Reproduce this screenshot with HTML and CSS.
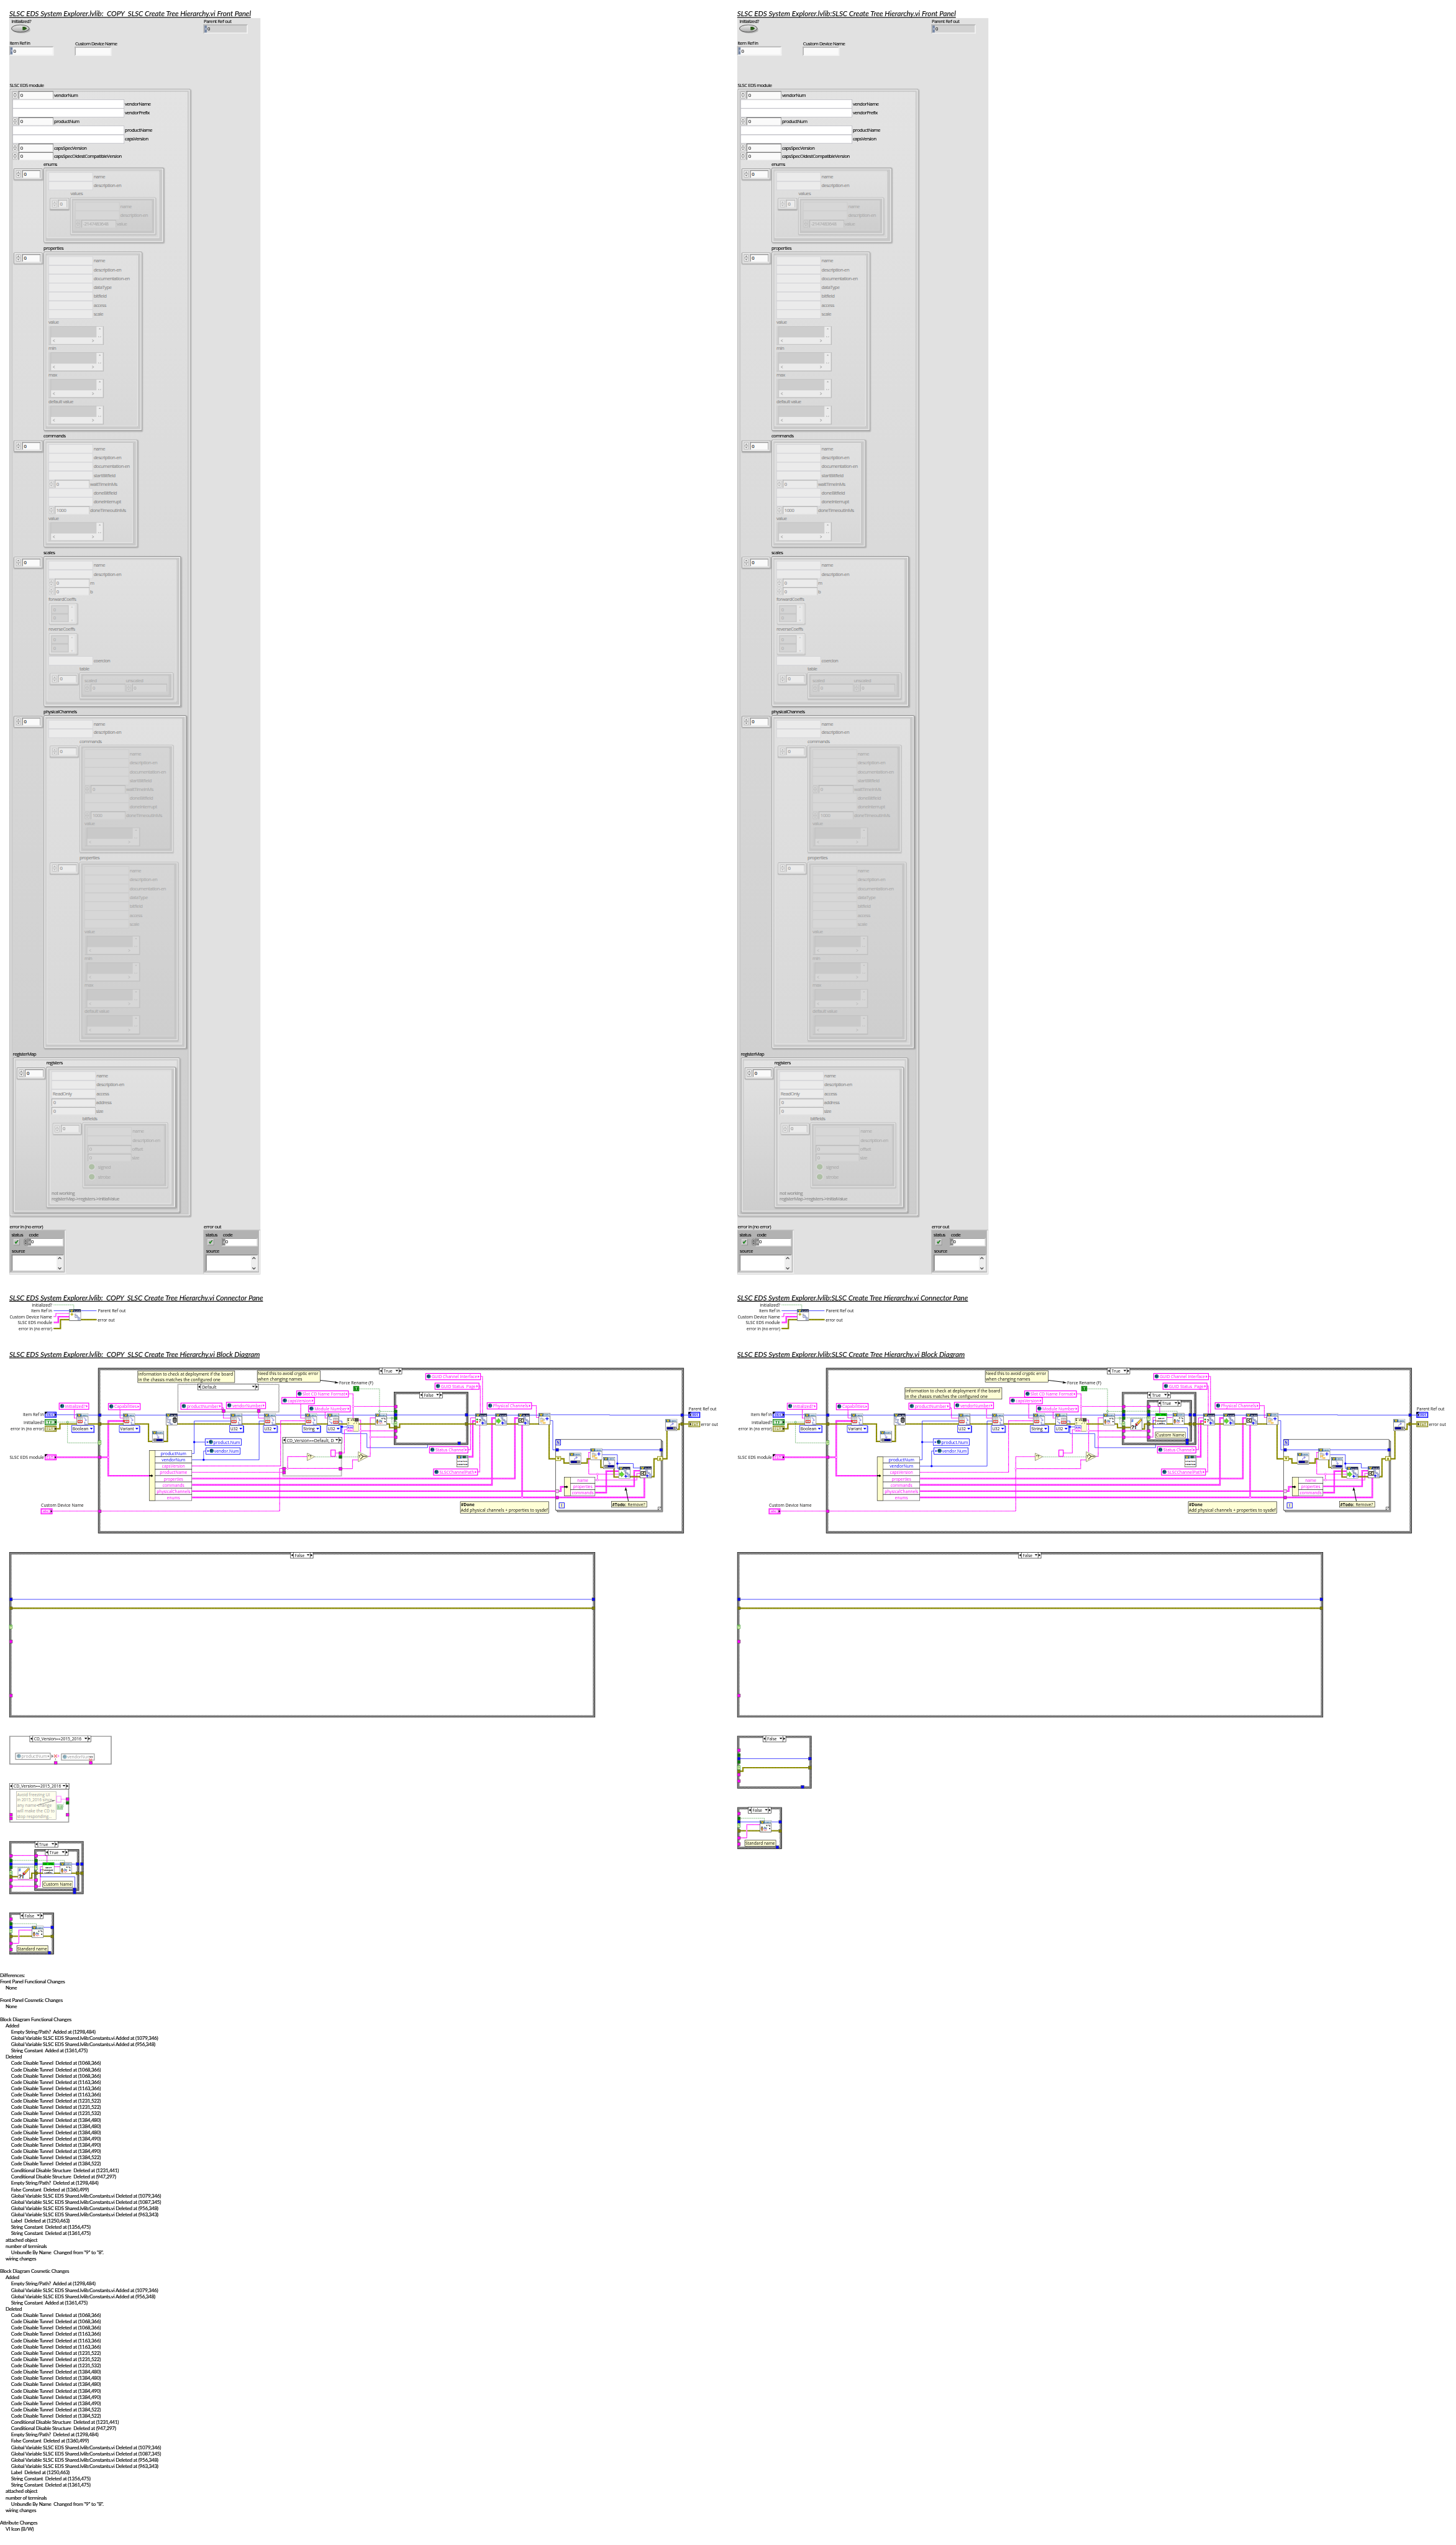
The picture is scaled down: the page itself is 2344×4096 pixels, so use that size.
FILE: index.html
```html
<!DOCTYPE html>
<html lang="en">
<head>
<meta charset="utf-8">
<title>SLSC Create Tree Hierarchy.vi - VI comparison report</title>
<link rel="stylesheet" href="styles.css">
</head>
<body>
<svg class="defs" width="0" height="0" aria-hidden="true">
  <defs>
    <pattern id="hatch" width="4" height="4" patternUnits="userSpaceOnUse">
      <rect width="4" height="4" fill="#222"/><rect width="2" height="2" fill="#e4e4e4"/><rect x="2" y="2" width="2" height="2" fill="#e4e4e4"/>
    </pattern>
    <pattern id="hatch-soft" width="4" height="4" patternUnits="userSpaceOnUse">
      <rect width="4" height="4" fill="#fff"/><rect width="2" height="2" fill="#777"/><rect x="2" y="2" width="2" height="2" fill="#777"/>
    </pattern>
    <linearGradient id="btn" x1="0" y1="0" x2="0" y2="1"><stop offset="0" stop-color="#eee"/><stop offset="1" stop-color="#aaa"/></linearGradient>

    <symbol id="spin" viewBox="0 0 13 20">
      <rect x=".7" y=".7" width="11.6" height="9" rx="2" fill="var(--key)" stroke="var(--edge)"/>
      <rect x=".7" y="10.3" width="11.6" height="9" rx="2" fill="var(--key)" stroke="var(--edge)"/>
      <path d="M3.5 6.5 6.5 3.8 9.5 6.5zM3.5 13.5 6.5 16.2 9.5 13.5z" fill="var(--mark)"/>
    </symbol>
    <symbol id="variant" viewBox="0 0 150 52">
      <rect width="150" height="52" fill="var(--well)"/>
      <path d="M0 51.3H149.3V0" fill="none" stroke="var(--edge)" stroke-width="1.4"/>
      <rect x="6" y="1" width="141" height="48" fill="var(--field)"/>
      <rect x="6" y="1" width="124" height="30" fill="var(--dark)"/>
      <path d="M6 49V1H147" fill="none" stroke="var(--edge)"/>
      <path d="M136 9 139 6 142 9zM135 30V27l3 3zM142 30V27l-3 3z" fill="var(--mark)"/>
      <path d="M17 37 12 40 17 43M118 37 123 40 118 43" fill="none" stroke="var(--mark)" stroke-width="1.6"/>
    </symbol>

    <symbol id="globe" viewBox="0 0 12 12">
      <circle cx="6" cy="6" r="5" fill="#1fb4e6" stroke="#111"/>
      <path d="M3 3l3-1 1 2-2 2 2 1-1 3-2-2-2-2zM8 3l2 2-1 3-2-1z" fill="#123"/>
    </symbol>
    <symbol id="nodes" viewBox="0 0 32 32">
      <path d="M18 12v13h4M18 15h4M22 17v3h4" fill="none" stroke="#557"/>
      <path d="M15 10h6v3h-6zM20 16h6v3h-6zM25 20h6v3h-6zM25 25h6v3h-6z" fill="#b9c3ee" stroke="#6470a8" stroke-width=".8"/>
      <path d="M20 22v8M16 26h8" stroke="#00f" stroke-width="2"/>
    </symbol>
    <symbol id="cdev" viewBox="0 0 32 32">
      <rect x=".5" y=".5" width="31" height="31" fill="#fff" stroke="#000"/>
      <rect x="1" y="1" width="30" height="7" fill="#dfeaf4"/><rect x="1" y="1" width="12" height="7" fill="#2f639c"/>
      <path d="M4 1.5 7 7 10 1.5" fill="none" stroke="#fc0" stroke-width="2.2"/>
      <text x="13.5" y="7" class="ic" textLength="16.5" fill="#2a6496">CDEV</text><path d="M1 8.5H31" stroke="#234"/>
    </symbol>
    <symbol id="slsc" viewBox="0 0 32 32">
      <rect x=".5" y=".5" width="31" height="31" fill="#fff" stroke="#000"/>
      <rect x="1" y="1" width="30" height="7" fill="#0b1440"/><rect x="1" y="1" width="11" height="7" fill="#2f639c"/>
      <path d="M4 1.5 7 7 10 1.5" fill="none" stroke="#fc0" stroke-width="2.2"/>
      <text x="13" y="7" class="ic" textLength="17" fill="#fff">SLSC</text>
    </symbol>
    <symbol id="set" viewBox="0 0 32 32">
      <use href="#cdev"/><rect x="3.500" y="10.500" width="12" height="16" fill="#eee" stroke="#777"/>
      <path d="M6 13h7M6 16h7M6 19h7" stroke="#888"/><rect x="3.500" y="19.500" width="12" height="5" fill="#fff" stroke="#e00" stroke-width="1.4"/><path d="M6 22h7" stroke="#444"/>
      <path d="M19 12q6 0 6 7M22 17l3 3 3-3" fill="none" stroke="#22c"/><path d="M20 24h4M26 29h4M22 26v3h4" stroke="#7f8cc8" stroke-width="2" fill="none"/>
    </symbol>
    <symbol id="get" viewBox="0 0 32 32">
      <use href="#cdev"/><rect x="16.500" y="12.500" width="12" height="16" fill="#eee" stroke="#777"/>
      <path d="M19 15h7M19 18h7" stroke="#888"/><rect x="16.500" y="21.500" width="12" height="5" fill="#fff" stroke="#e00" stroke-width="1.4"/><path d="M19 24h7" stroke="#444"/>
      <path d="M6 20q0 6 7 6M10 23l3 3-3 3" fill="none" stroke="#22c"/><path d="M3 12h5M7 17h5M5 14v3" stroke="#7f8cc8" stroke-width="2" fill="none"/>
    </symbol>
    <symbol id="down" viewBox="0 0 32 32">
      <use href="#cdev"/><path d="M12 11q5 0 5 8M13.500 16l3.500 4 3.500-4" fill="none" stroke="#22c"/>
      <rect x="4" y="22" width="25" height="6" fill="#ccc" stroke="#000"/><rect x="12" y="22.500" width="16.500" height="5" fill="#00c"/><path d="M8 22v6M12 22v6M16 22v6M20 22v6M24 22v6" stroke="#000"/>
    </symbol>
    <symbol id="up" viewBox="0 0 32 32">
      <use href="#cdev"/><path d="M14 20q0-7 7-7M18 10l4 3-4 3" fill="none" stroke="#22c"/>
      <rect x="4" y="22" width="25" height="6" fill="#ccc" stroke="#000"/><rect x="4.500" y="22.500" width="16" height="5" fill="#00c"/><path d="M8 22v6M12 22v6M16 22v6M20 22v6M24 22v6" stroke="#000"/>
    </symbol>
    <symbol id="tree" viewBox="0 0 32 32">
      <use href="#cdev"/><path d="M5 13h5v3h-5zM11 17h5v3h-5z" fill="#eee" stroke="#888"/><path d="M6 16v11h4M7 22h3M10 15h6" fill="none" stroke="#888"/>
      <path d="M6 20h6v3h-6zM12 25h6v3h-6z" fill="#fff" stroke="#f0a800" stroke-width="1.4"/><path d="M23 11v9M18.500 15.500h9" stroke="#00f" stroke-width="2"/>
    </symbol>
    <symbol id="rename" viewBox="0 0 32 32">
      <use href="#cdev"/><circle cx="6" cy="18" r="2" fill="#555"/><path d="M3.500 20h5l-1 6-1.500 3-1.500-3z" fill="#f09a20" stroke="#222" stroke-width=".8"/>
      <path d="M11 19q2-4 4 0t4-1" fill="none" stroke="#080"/><path d="M10 23h2v-3h3v3h3v-3" fill="none" stroke="#00a"/><path d="M10 28l3-3 2 3 3-3 2 2" fill="none" stroke="#e00"/>
      <text x="17" y="15.500" class="ic">A</text><text x="25" y="23.500" class="ic">B</text><path d="M22 13h5v3M25 14.500l2 2 2-2" fill="none" stroke="#000"/>
    </symbol>
    <symbol id="trash" viewBox="0 0 32 32">
      <use href="#slsc"/><path d="M4 11v14h4M4 17h5M11 19v9h4" fill="none" stroke="#557"/>
      <path d="M3 10h5v3H3zM8 16h6v3H8zM7 23h6v3H7zM13 27h5v3h-5z" fill="#b9c3ee" stroke="#6470a8" stroke-width=".7"/>
      <path d="M20 13h9v9l-2 3h-5l-2-3z" fill="#999" stroke="#000" stroke-width="1.5"/><ellipse cx="24.500" cy="12.500" rx="4" ry="2" fill="#555" stroke="#000"/><path d="M23 16v6M26 16v6" stroke="#222"/>
    </symbol>
    <symbol id="status" viewBox="0 0 32 32"><use href="#slsc"/><use href="#nodes"/><circle cx="5" cy="16.500" r="2.300" fill="#0a0"/><circle cx="5" cy="23" r="2.300" fill="#e00"/><text x="9" y="23.500" class="q">?</text></symbol>
    <symbol id="cmd" viewBox="0 0 32 32"><use href="#slsc"/><use href="#nodes"/><path d="M3 17h5v-4l7 7.500-7 7.500v-4H3z" fill="#6d3" stroke="#391"/></symbol>
    <symbol id="prop" viewBox="0 0 32 32"><use href="#slsc"/><use href="#nodes"/><rect x="3" y="14" width="12" height="10" fill="#ffd" stroke="#000" stroke-width="1.600"/><path d="M5 19h4M12 16H9v6h3" stroke="#000" stroke-width="1.500" fill="none"/></symbol>
    <symbol id="create" viewBox="0 0 32 32"><use href="#slsc"/><path d="M14 13.500h5M16 14v9h4M20 18h3M22 21h1" stroke="#446" fill="none"/><path d="M17 16h5v2.500h-5zM20 20h5v2.500h-5zM23 23h6v2.500h-6zM23 27h6v2h-6z" fill="#b9c3ee" stroke="#6470a8" stroke-width=".7"/><path d="M7.500 9.500v9M3 14h9M4.500 11l6 6M10.500 11l-6 6" stroke="#c8b400" stroke-width="1.300"/><circle cx="7.500" cy="14" r="1.800" fill="#ff0" stroke="#333" stroke-width=".7"/></symbol>
    <symbol id="unique" viewBox="0 0 32 32"><rect x=".5" y=".5" width="31" height="31" fill="#fff" stroke="#000"/><rect x="1" y="1" width="30" height="7" fill="#0e0"/><text x="1.500" y="7" class="ic" textLength="29">CDV UTIL</text><text x="8" y="16" class="ic" textLength="17">NEXT</text><text x="3.500" y="23" class="ic" textLength="25">UNIQUE</text><text x="5" y="30" class="ic" textLength="22">LABEL</text><path d="M0 18l3 2.500-3 2.500z" fill="#e00"/></symbol>
    <symbol id="eraser" viewBox="0 0 32 32"><rect x=".5" y=".5" width="31" height="31" fill="#fff" stroke="#000"/><text x="2" y="11" class="hash">#</text><text x="1.500" y="29" class="big">?!</text><path d="M17 13 28 2l3 3-10 12z" fill="#fc3" stroke="#000" stroke-width=".8"/><path d="M13 16l4-4 5 4-5 5z" fill="#d12" stroke="#000" stroke-width=".8"/><path d="M16 13l5 4" stroke="#ddd" stroke-width="2"/></symbol>
    <symbol id="config" viewBox="0 0 32 32"><rect x=".5" y=".5" width="31" height="31" fill="#fff" stroke="#000"/><rect x="1" y="1" width="13" height="8" fill="#2f639c"/><rect x="14" y="1" width="17" height="8" fill="#bcd"/><path d="M4 2 7 7.500 10 2" fill="none" stroke="#fc0" stroke-width="2.200"/><rect x="17" y="2.500" width="8" height="5" fill="#174" stroke="#222"/><path d="M28.500 2v6" stroke="#222"/><text x="2.500" y="19" class="ic" textLength="27">STATUS</text><text x="2.500" y="27.500" class="ic" textLength="27">CONFIG</text></symbol>
    <symbol id="format" viewBox="0 0 32 37"><rect x=".5" y=".5" width="31" height="36" fill="#ffffcc" stroke="#554"/><text x="1.500" y="9" class="fm">E</text><text x="10" y="9" class="fm">+%</text><rect x="22" y="2" width="8" height="7" fill="#555" stroke="#000"/><text x="2" y="18" class="fm">!</text><path d="M17 17l4-4M26 12v4" stroke="#000"/><rect x=".5" y="21" width="16" height="7.500" fill="#fff" stroke="#00f"/><text x="2" y="27.500" class="ic" textLength="13" fill="#00f">U32</text><rect x=".5" y="28.500" width="16" height="8" fill="#fff" stroke="#f0f"/><text x="2" y="35" class="ic" textLength="13" fill="#f0f">abc</text></symbol>
  </defs>
</svg>

<main class="page">
  <section class="column">
    <h2 class="title" data-width="653">SLSC EDS System Explorer.lvlib:  COPY  SLSC Create Tree Hierarchy.vi Front Panel</h2>
    <div class="panel" id="panel">
      <div class="strip">
        <div class="ctl w-ref"><span class="lb">Initialized?</span>
          <svg class="toggle" viewBox="0 0 53 25"><ellipse cx="28" cy="14.500" rx="24" ry="9.500" fill="#9a9a9a" opacity=".6"/><ellipse cx="25" cy="11" rx="24" ry="9.800" fill="url(#btn)" stroke="#444" stroke-width="1.500"/><path d="M31 6h5q3 0 7 5-4 4-7 4.500h-5z" fill="#2a5c18"/></svg></div>
        <div class="ctl w-out"><span class="lb">Parent Ref out</span><div class="ref out"><i>x</i>0</div></div>
      </div>
      <div class="strip second">
        <div class="ctl w-item"><span class="lb">Item Ref in</span><div class="ref"><i>x</i>0</div></div>
        <div class="ctl w-name"><span class="lb">Custom Device Name</span><div class="ref name"></div></div>
      </div>
      <span class="lb block">SLSC EDS module</span>
      <div class="cluster main">
        <div class="row n"><svg class="spin"><use href="#spin"/></svg><b class="num">0</b><span>vendorNum</span></div>
        <div class="row"><b class="str wide"></b><span>vendorName</span></div>
        <div class="row"><b class="str wide"></b><span>vendorPrefix</span></div>
        <div class="row n"><svg class="spin"><use href="#spin"/></svg><b class="num">0</b><span>productNum</span></div>
        <div class="row"><b class="str wide"></b><span>productName</span></div>
        <div class="row"><b class="str wide"></b><span>capsVersion</span></div>
        <div class="row n"><svg class="spin"><use href="#spin"/></svg><b class="num">0</b><span>capsSpecVersion</span></div>
        <div class="row n"><svg class="spin"><use href="#spin"/></svg><b class="num">0</b><span data-width="183" data-scope=".panel">capsSpecOldestCompatibleVersion</span></div>

        <div class="cap">enums</div>
        <div class="array">
          <div class="index"><svg class="spin"><use href="#spin"/></svg><b class="num">0</b></div>
          <div class="frame f-enums"><div class="cluster dim">
            <div class="row"><b class="str"></b><span>name</span></div>
            <div class="row"><b class="str"></b><span>description-en</span></div>
            <div class="cap short">values</div>
            <div class="array">
              <div class="index small"><svg class="spin"><use href="#spin"/></svg><b class="num">0</b></div>
              <div class="frame f-values"><div class="cluster dim dimmer">
                <div class="row"><b class="str"></b><span>name</span></div>
                <div class="row"><b class="str"></b><span>description-en</span></div>
                <div class="row n"><svg class="spin"><use href="#spin"/></svg><b class="num">-2147483648</b><span>value</span></div>
              </div></div>
            </div>
          </div></div>
        </div>

        <div class="cap next">properties</div>
        <div class="array">
          <div class="index"><svg class="spin"><use href="#spin"/></svg><b class="num">0</b></div>
          <div class="frame f-props"><div class="cluster dim" id="props">
            <div class="row"><b class="str"></b><span>name</span></div>
            <div class="row"><b class="str"></b><span>description-en</span></div>
            <div class="row"><b class="str"></b><span>documentation-en</span></div>
            <div class="row"><b class="str"></b><span>dataType</span></div>
            <div class="row"><b class="str"></b><span>bitfield</span></div>
            <div class="row"><b class="str"></b><span>access</span></div>
            <div class="row"><b class="str"></b><span>scale</span></div>
            <div class="vl">value</div><svg class="variant"><use href="#variant"/></svg>
            <div class="vl">min</div><svg class="variant"><use href="#variant"/></svg>
            <div class="vl">max</div><svg class="variant"><use href="#variant"/></svg>
            <div class="vl">default value</div><svg class="variant"><use href="#variant"/></svg>
          </div></div>
        </div>

        <div class="cap next">commands</div>
        <div class="array">
          <div class="index"><svg class="spin"><use href="#spin"/></svg><b class="num">0</b></div>
          <div class="frame f-cmds"><div class="cluster dim" id="cmds">
            <div class="row"><b class="str"></b><span>name</span></div>
            <div class="row"><b class="str"></b><span>description-en</span></div>
            <div class="row"><b class="str"></b><span>documentation-en</span></div>
            <div class="row"><b class="str"></b><span>startBitfield</span></div>
            <div class="row n"><svg class="spin"><use href="#spin"/></svg><b class="num">0</b><span>waitTimeInMs</span></div>
            <div class="row"><b class="str"></b><span>doneBitfield</span></div>
            <div class="row"><b class="str"></b><span>doneInterrupt</span></div>
            <div class="row n"><svg class="spin"><use href="#spin"/></svg><b class="num">1000</b><span>doneTimeoutInMs</span></div>
            <div class="vl">value</div><svg class="variant"><use href="#variant"/></svg>
          </div></div>
        </div>

        <div class="cap next">scales</div>
        <div class="array">
          <div class="index"><svg class="spin"><use href="#spin"/></svg><b class="num">0</b></div>
          <div class="frame f-scales"><div class="cluster dim">
            <div class="row"><b class="str"></b><span>name</span></div>
            <div class="row"><b class="str"></b><span>description-en</span></div>
            <div class="row n"><svg class="spin"><use href="#spin"/></svg><b class="num">0</b><span>m</span></div>
            <div class="row n"><svg class="spin"><use href="#spin"/></svg><b class="num">0</b><span>b</span></div>
            <div class="vl">forwardCoeffs</div>
            <div class="coeffs"><div><b>0</b><b>0</b></div><i><s>▲</s><s>▼</s></i></div>
            <div class="vl gap">reverseCoeffs</div>
            <div class="coeffs"><div><b>0</b><b>0</b></div><i><s>▲</s><s>▼</s></i></div>
            <div class="row coercion"><b class="str"></b><span>coercion</span></div>
            <div class="cap">table</div>
            <div class="array">
              <div class="index"><svg class="spin"><use href="#spin"/></svg><b class="num">0</b></div>
              <div class="frame f-table"><div class="cluster dim dimmer pair">
                <div><span>scaled</span><div class="row n"><svg class="spin"><use href="#spin"/></svg><b class="num">0</b></div></div>
                <div><span>unscaled</span><div class="row n"><svg class="spin"><use href="#spin"/></svg><b class="num">0</b></div></div>
              </div></div>
            </div>
          </div></div>
        </div>

        <div class="cap next">physicalChannels</div>
        <div class="array">
          <div class="index"><svg class="spin"><use href="#spin"/></svg><b class="num">0</b></div>
          <div class="frame f-phys"><div class="cluster dim">
            <div class="row"><b class="str"></b><span>name</span></div>
            <div class="row lift"><b class="str"></b><span>description-en</span></div>
            <div class="cap">commands</div>
            <div class="array">
              <div class="index"><svg class="spin"><use href="#spin"/></svg><b class="num">0</b></div>
              <div class="frame f-cmds"><div class="cluster dim dimmer" data-clone="cmds"></div></div>
            </div>
            <div class="cap next">properties</div>
            <div class="array">
              <div class="index"><svg class="spin"><use href="#spin"/></svg><b class="num">0</b></div>
              <div class="frame f-props"><div class="cluster dim dimmer" data-clone="props"></div></div>
            </div>
          </div></div>
        </div>

        <div class="cap next root">registerMap</div>
        <div class="cluster map">
          <div class="cap">registers</div>
          <div class="array">
            <div class="index"><svg class="spin"><use href="#spin"/></svg><b class="num">0</b></div>
            <div class="frame f-regs"><div class="cluster dim">
              <div class="row"><b class="str"></b><span>name</span></div>
              <div class="row"><b class="str"></b><span>description-en</span></div>
              <div class="row"><b class="str">ReadOnly</b><span>access</span></div>
              <div class="row n"><b class="num full">0</b><span>address</span></div>
              <div class="row n"><b class="num full">0</b><span>size</span></div>
              <div class="cap">bitfields</div>
              <div class="array">
                <div class="index"><svg class="spin"><use href="#spin"/></svg><b class="num">0</b></div>
                <div class="frame f-bits"><div class="cluster dim dimmer">
                  <div class="row"><b class="str"></b><span>name</span></div>
                  <div class="row"><b class="str"></b><span>description-en</span></div>
                  <div class="row n"><b class="num full">0</b><span>offset</span></div>
                  <div class="row n"><b class="num full">0</b><span>size</span></div>
                  <div class="row led"><i></i><span>signed</span></div>
                  <div class="row led"><i></i><span>strobe</span></div>
                </div></div>
              </div>
              <p class="remark">not working<br>registerMap-&gt;registers-&gt;initialValue</p>
            </div></div>
          </div>
        </div>
      </div>
      <div class="strip errors">
        <div class="ctl"><span class="lb">error in (no error)</span>
          <div class="error">
            <div class="heads"><span>status</span><span>code</span></div>
            <div class="vals"><svg class="check" viewBox="0 0 20 20"><rect width="20" height="20" fill="#888"/><path d="M0 20V0H20L18 2V18H2z" fill="#e4e4e4"/><rect x="2" y="2" width="16" height="16" fill="#c8c8c8"/><path d="M5 10l3 5 7-10-2 0-5 6-1-2z" fill="#0e0" stroke="#111"/></svg>
              <svg class="knob" viewBox="0 0 12 22"><rect x="1" y="1" width="10" height="20" rx="5" fill="#aaa" stroke="#666"/><path d="M3 8.500 6 5 9 8.500zM3 13.500 6 17 9 13.500zM1 11H11" fill="#333" stroke="#666" stroke-width=".5"/></svg>
              <div class="code"><i>d</i>0</div></div>
            <span>source</span>
            <div class="source"><svg viewBox="0 0 16 38"><rect width="16" height="38" fill="#eee"/><path d="M4 9l4-4 4 4M4 31l4 4 4-4" fill="none" stroke="#555" stroke-width="2.200"/></svg></div>
          </div></div>
        <div class="ctl"><span class="lb">error out</span>
          <div class="error">
            <div class="heads"><span>status</span><span>code</span></div>
            <div class="vals"><svg class="check" viewBox="0 0 20 20"><rect width="20" height="20" fill="#888"/><path d="M0 20V0H20L18 2V18H2z" fill="#e4e4e4"/><rect x="2" y="2" width="16" height="16" fill="#c8c8c8"/><path d="M5 10l3 5 7-10-2 0-5 6-1-2z" fill="#0e0" stroke="#111"/></svg>
              <svg class="knob" viewBox="0 0 12 22"></svg>
              <div class="code"><i>d</i>0</div></div>
            <span>source</span>
            <div class="source"><svg viewBox="0 0 16 38"><rect width="16" height="38" fill="#eee"/><path d="M4 9l4-4 4 4M4 31l4 4 4-4" fill="none" stroke="#555" stroke-width="2.200"/></svg></div>
          </div></div>
      </div>
    </div>
    <h2 class="title pane" data-width="686">SLSC EDS System Explorer.lvlib:  COPY  SLSC Create Tree Hierarchy.vi Connector Pane</h2>
    <svg class="sketch" data-draw="connector" viewBox="0 3518 1960 82"></svg>
    <h2 class="title blocks" data-width="677">SLSC EDS System Explorer.lvlib:  COPY  SLSC Create Tree Hierarchy.vi Block Diagram</h2>
    <svg class="sketch" data-draw="before" viewBox="0 31 1960 479"></svg>
    <svg class="sketch sub first" data-draw="outerFalse" viewBox="-25 0 1960 447"></svg>
    <svg class="sketch sub" data-draw="version1" viewBox="-25 0 1960 78"></svg>
    <svg class="sketch sub" data-draw="version2" viewBox="-25 0 1960 107"></svg>
    <svg class="sketch sub" data-draw="innerTrue" viewBox="-25 0 1960 143"></svg>
    <svg class="sketch sub" data-draw="standard" viewBox="-25 0 1960 113"></svg>
    <div class="diff" id="diff"></div>
  </section>

  <section class="column">
    <h2 class="title" data-width="591">SLSC EDS System Explorer.lvlib:SLSC Create Tree Hierarchy.vi Front Panel</h2>
    <div class="panel" data-clone="panel"></div>
    <h2 class="title pane" data-width="624">SLSC EDS System Explorer.lvlib:SLSC Create Tree Hierarchy.vi Connector Pane</h2>
    <svg class="sketch" data-draw="connector" viewBox="0 3518 1960 82"></svg>
    <h2 class="title blocks" data-width="615">SLSC EDS System Explorer.lvlib:SLSC Create Tree Hierarchy.vi Block Diagram</h2>
    <svg class="sketch" data-draw="after" viewBox="0 31 1960 479"></svg>
    <svg class="sketch sub first" data-draw="outerFalse" viewBox="-25 0 1960 447"></svg>
    <svg class="sketch sub" data-draw="innerFalse" viewBox="-25 0 1960 143"></svg>
    <svg class="sketch sub" data-draw="standard" viewBox="-25 0 1960 113"></svg>
  </section>
</main>
<script src="script.js"></script>
</body>
</html>
```
FILE: styles.css
```css
* { box-sizing: border-box; }
html { overflow: hidden; background: #fff; }
body { margin: 0; width: 2344px; height: 4096px; overflow: hidden; background: #fff; }
.defs { display: block; position: absolute; }
.page {
  display: grid; grid-template-columns: 1968px 1960px; align-items: start;
  width: 3928px; height: 6876px; overflow: hidden;
  transform: scale(.5955); transform-origin: 0 0;
  font: 12.800px/15px "Open Sans", "Noto Sans", sans-serif; color: #000;
  -webkit-text-stroke: .2px;
}
.column { display: flex; flex-direction: column; align-items: flex-start; min-width: 0; }

.title {
  margin: 20px 0 1px 25px; height: 28px; width: max-content;
  font: italic 400 19.6px/33px Lato, "Open Sans", sans-serif;
  white-space: pre; border-bottom: 2px solid #000;
}
.title.pane { margin: 45px 0 0 25px; }
.title.blocks { margin: 43px 0 0 25px; }

/* ---- front panel ---- */
.panel {
  --ink: #000; --field: #fafafa; --line: #a4a4ac; --edge: #888; --key: #f0f0f0; --mark: #555; --well: #ccc; --dark: #cecece;
  width: 679px; height: 3396px; margin-left: 25px; background: #e1e1e1; color: var(--ink);
}
.panel b, .panel i, .panel s { font-weight: 400; font-style: normal; text-decoration: none; }
.panel span, .cap, .vl { white-space: nowrap; }
.strip { display: flex; justify-content: space-between; height: 58.5px; }
.strip.second { justify-content: flex-start; gap: 57px; height: 114px; }
.strip.errors { margin-top: 20px; height: 138px; }
.ctl { display: flex; flex-direction: column; align-items: flex-start; }
.lb { height: 17px; line-height: 17px; padding-left: 1px; }
.w-ref .lb { padding-left: 6px; }
.lb.block { display: block; }
.w-out { width: 154px; }
.w-item, .ref { width: 120px; }
.w-name { width: 100px; padding-top: 1.500px; }
.toggle { width: 53px; height: 25px; margin-left: 5px; }
.ref {
  display: flex; height: 25px; line-height: 18px;
  background: #fafafa; border: 3px solid; border-color: #b4b4b4 #f2f2f2 #f2f2f2 #b4b4b4;
}
.ref i { width: 6px; margin-right: 2px; background: #7486a4; color: #dde; font-size: 8px; text-align: center; }
.ref.out { background: #d2d2d2; }
.ref.name { width: 99px; }

.cluster { display: flex; flex-direction: column; align-items: flex-start; border-radius: 3px; }
.main {
  width: 489px; height: 3047.600px; margin: 1px 0 0 1px; padding: 6px 7.500px;
  background: linear-gradient(#e3e3e3, #cdcdcd);
  box-shadow: inset 0 0 0 1.500px #8a8a8a, inset 0 0 0 3.500px #f0f0f0, inset 0 0 0 5px #d8d8d8, inset 0 0 0 8px #c9c9c9, 2px 2px 3px rgba(0,0,0,.25);
}
.row { display: flex; align-items: center; height: 24px; flex: none; }
.row.n { height: 23px; padding-left: .5px; }
.spin { width: 13px; height: 20px; flex: none; }
.row .spin { margin-right: 3px; }
.row span { padding-left: 2px; }
.str {
  width: 120px; height: 24px; padding: 2px 3px; line-height: 17px;
  background: var(--field); border: 1px solid var(--line);
}
.str.wide { width: 302px; background: #fff; }
.num {
  display: block; width: 94px; height: 22px; padding-left: 3px; line-height: 18px;
  background: var(--field); border: 2px solid var(--edge); border-right-width: 1.500px; border-bottom-color: var(--key);
}
.main > .row .num { border-color: #707070 #777 #eee #707070; }
.num.full { width: 118.500px; height: 21px; line-height: 17px; }
.row.lift span { margin-top: -7px; }

.cap { height: 19.500px; line-height: 18px; padding-left: 84px; flex: none; }
.main > .cap { height: 19px; }
.cap.short { padding-left: 59.500px; }
.cap.next { margin-top: 5px; }
.main > .cap.root { padding-left: 1px; }
.vl { height: 20px; line-height: 19px; flex: none; }
.vl.gap { margin-top: 4px; }
.variant { width: 150px; height: 51.800px; display: block; flex: none; }

.array { display: flex; align-items: flex-start; gap: 3px; padding-left: 3.500px; flex: none; }
.index {
  display: flex; align-items: center; gap: 3.500px; width: 77.500px; height: 31px; margin-top: 2.300px; padding-left: 6px;
  border-radius: 3px; background: #dcdcdc;
  box-shadow: inset 0 0 0 1.400px var(--edge), inset 0 0 0 3px var(--key), 1px 2px 2px rgba(0,0,0,.2);
}
.index .num { width: 49.500px; height: 21px; line-height: 17px; }
.index.small { width: 52px; }
.index.small .num { width: 24px; }
.frame {
  padding: 8px 7.500px; border-radius: 3px; background: #c9c9c9; flex: none;
  box-shadow: inset 0 0 0 1.500px #858585, inset 0 0 0 3.500px #f0f0f0, inset 0 0 0 5px #d8d8d8, 2px 2px 3px rgba(0,0,0,.22);
}
.dim {
  --ink: #8a8a8a; --field: #ebebeb; --line: #c9c9ce; --edge: #b2b2b2; --key: #e6e6e6; --mark: #a2a2a2; --well: #d0d0d0; --dark: #cdcdcd;
  padding: 5px 6px; color: var(--ink);
  background: linear-gradient(#e1e1e1, #d8d8d8);
  box-shadow: inset 0 0 0 1.200px #b4b4b4, inset 0 0 0 2.500px #ececec, inset 0 0 0 4px #dcdcdc;
}
.dim .frame { padding: 7.500px; background: #c6c6c6; box-shadow: inset 0 0 0 1.300px #b4b4b4, inset 0 0 0 4px #e4e4e4, 1px 2px 2px rgba(0,0,0,.1); }
.dimmer {
  --ink: #ababab; --field: #d7d7d7; --line: #c8c8c8; --edge: #b8b8b8; --key: #d4d4d4; --mark: #bbb; --well: #cbcbcb; --dark: #c9c9c9;
  background: linear-gradient(#d5d5d5, #cecece);
  box-shadow: inset 0 0 0 1px #c0c0c0, inset 0 0 0 2px #d8d8d8;
}
.f-enums { width: 325px; height: 203px; } .f-enums > .cluster { width: 307px; height: 184.500px; }
.dim .f-values { width: 231px; height: 101px; } .f-values > .cluster { width: 213.500px; height: 83px; }
.f-props { width: 266.500px; height: 484px; } .f-props > .cluster { width: 249px; height: 466px; }
.f-cmds { width: 254px; height: 291px; } .f-cmds > .cluster { width: 236px; height: 273px; }
.f-scales { width: 371px; height: 406px; } .f-scales > .cluster { width: 353.500px; height: 387px; }
.f-table { width: 252.600px; height: 71.500px; } .f-table > .cluster { width: 234px; height: 53.500px; }
.f-phys { width: 386px; height: 901.500px; } .f-phys > .cluster { width: 368.500px; height: 883.500px; }
.f-regs { width: 350px; height: 381.700px; } .f-regs > .cluster { width: 332px; height: 364px; }
.f-bits { width: 231px; height: 177px; } .f-bits > .cluster { width: 213.500px; height: 160px; }
.pair { flex-direction: row; gap: 1px; }
.pair span { display: block; height: 18px; line-height: 18px; }

.coeffs {
  display: flex; width: 77px; height: 57.500px; margin-left: 1px; padding: 6px; border-radius: 3px; background: #dedede; flex: none; color: #b0b0b0;
  box-shadow: inset 0 0 0 1.400px #b4b4b4, inset 0 0 0 3px #eaeaea, 1px 2px 2px rgba(0,0,0,.12);
}
.coeffs div { width: 48px; background: #c6c6c6; }
.coeffs b { display: block; height: 21px; margin: 1px 1px 2px; padding-left: 4px; line-height: 19px; background: #d4d4d4; border: 1px solid #c0c0c0; }
.coeffs i { width: 16px; background: #e9e9e9; display: flex; flex-direction: column; justify-content: space-between; font-size: 7px; line-height: 9px; text-align: center; color: #ccc; }
.coercion { margin-top: 5px; }

.map {
  width: 451.600px; height: 418.500px; margin-left: 1px; padding: 5px 6px 0 6.500px;
  background: linear-gradient(#e3e3e3, #cdcdcd);
  box-shadow: inset 0 0 0 1.500px #8a8a8a, inset 0 0 0 3.500px #f0f0f0, inset 0 0 0 5px #d8d8d8, inset 0 0 0 8px #cdcdcd, 2px 2px 3px rgba(0,0,0,.22);
}
.led i { width: 20px; height: 19px; margin: 0 5px 0 2px; border-radius: 50%; background: #afc0a6; border: 2px solid #dcdcdc; }
.led.row { height: 27px; }
.remark { margin: 7px 0 0 1px; line-height: 15px; }

.error { display: flex; flex-direction: column; width: 154px; height: 119px; padding: 3px 4px; background: #b2b2b2; border: solid; border-color: #bdbdbd #eee #eee #bdbdbd; border-width: 2px 4px 4px 2px; }
.error .heads { display: flex; height: 18px; line-height: 17px; }
.error .heads span:first-child { width: 47px; }
.error .vals { display: flex; align-items: center; height: 22px; margin-bottom: 5px; padding-left: 5px; }
.error > span { height: 17px; line-height: 16px; padding-left: 1px; }
.check { width: 20px; height: 20px; }
.knob { width: 12px; height: 22px; margin: 0 0 0 10px; }
.code { display: flex; flex: none; width: 97px; height: 22px; line-height: 17px; background: #fff; border: 2px solid; border-color: #888 #ddd #ddd #888; }
.code i { width: 8px; background: #888; color: #ddd; font-size: 10px; text-align: center; }
.source { display: flex; justify-content: flex-end; width: 142px; height: 46px; margin-top: 1px; background: #fff; border: 3px solid; border-color: #888 #ddd #ddd #888; }
.source svg { height: 100%; }

/* ---- block diagrams ---- */
.sketch { display: block; width: 1960px; flex: none; overflow: hidden; }
.sketch.sub { margin-top: 50px; }
.sketch.sub.first { margin-top: 45px; margin-bottom: -1px; }
.sketch text { font: 12.800px "Open Sans", "Noto Sans", sans-serif; white-space: pre; }
.sketch text.bold { font-weight: 700; }
.sketch path { fill: none; }
.blue { stroke: #00f; stroke-width: 1.200; }
.pink { stroke: #f0f; stroke-width: 2; stroke-dasharray: 3 .7; }
.green { stroke: #0a7d0a; stroke-width: 1.200; stroke-dasharray: 1.300 1.200; }
.thick { stroke: #f0f; stroke-width: 4; }
.thick-fill { stroke: #fff; stroke-width: 1.300; stroke-dasharray: 2 2; }
.err { stroke: #7d7d00; stroke-width: 3.600; }
.err-core { stroke: #ff0; stroke-width: 1.200; }
.err-dash { stroke: #000; stroke-width: 1.200; stroke-dasharray: 2 2; }
.arrow { stroke: #111; stroke-width: 1.800; }
.sketch path.solid { fill: currentColor; stroke: none; }
text.ic { font: 700 6.500px "Liberation Mono", monospace; }
text.q { font: 700 12px "Liberation Sans", sans-serif; }
text.hash { font: 700 11px "Liberation Sans", sans-serif; fill: #0038c8; }
text.big { font: 700 16px "Liberation Sans", sans-serif; }
text.fm { font: 700 8px "Liberation Mono", monospace; }
.sketch text.term { font: 700 8px "Liberation Mono", monospace; }

/* ---- list of differences ---- */
.diff { margin: 48px 0 0; font: 13.500px/17.020px Lato, "Open Sans", sans-serif; -webkit-text-stroke: .3px; }
.diff p { height: 17.020px; margin: 0; width: max-content; white-space: pre; }
.diff .in1 { margin-left: 15px; }
.diff .in2 { margin-left: 30px; }
```
FILE: script.js
```js
/* Repeats the shared form sections. */
for (const el of document.querySelectorAll('[data-clone]:not(.panel)')) {
  el.innerHTML = document.getElementById(el.dataset.clone).innerHTML;
}

/* ---- list of differences: one line each, indented by its leading dots ---- */
const times = (n, s) => Array(n).fill('..Code Disable Tunnel  Deleted at (' + s + ')');
const globalVar = '..Global Variable SLSC EDS Shared.lvlib:Constants.vi ';
const blockChanges = [
  '.Added', '..Empty String/Path?  Added at (1298,484)', globalVar + 'Added at (1079,346)', globalVar + 'Added at (956,348)', '..String Constant  Added at (1361,475)',
  '.Deleted', ...times(3, '1068,366'), ...times(3, '1163,366'), ...times(2, '1231,522'), ...times(1, '1231,532'), ...times(3, '1384,480'), ...times(3, '1384,490'), ...times(2, '1384,522'),
  '..Conditional Disable Structure  Deleted at (1231,441)', '..Conditional Disable Structure  Deleted at (947,297)', '..Empty String/Path?  Deleted at (1298,484)', '..False Constant  Deleted at (1360,499)',
  ...['1079,346', '1087,345', '956,348', '963,343'].map(p => globalVar + 'Deleted at (' + p + ')'),
  '..Label  Deleted at (1250,463)', '..String Constant  Deleted at (1356,475)', '..String Constant  Deleted at (1361,475)',
  '.attached object', '.number of terminals', '..Unbundle By Name  Changed from "9" to "8".', '.wiring changes', ''];
const lines = ['Differences:', 'Front Panel Functional Changes', '.None', '', 'Front Panel Cosmetic Changes', '.None', '',
  'Block Diagram Functional Changes', ...blockChanges, 'Block Diagram Cosmetic Changes', ...blockChanges, 'Attribute Changes', '.VI Icon (B/W)'];
const diff = document.getElementById('diff');
for (const line of lines) {
  const p = document.createElement('p');
  const depth = line.match(/^\.*/)[0].length;
  if (depth) p.className = 'in' + depth;
  p.textContent = line.slice(depth);
  if (line === globalVar + 'Added at (1079,346)') { p.dataset.width = 397; p.dataset.scope = '.diff'; }
  diff.append(p);
}

for (const el of [...document.querySelectorAll('[data-width]')]) {
  const target = el.dataset.scope ? el.closest(el.dataset.scope) : el;
  if (target.style.letterSpacing) continue;
  const shown = el.style.display;
  el.style.display = 'inline-block';
  const natural = el.offsetWidth - parseFloat(getComputedStyle(el).paddingLeft);
  el.style.display = shown;
  target.style.letterSpacing = ((parseFloat(el.dataset.width) - natural) / el.textContent.length).toFixed(3) + 'px';
}
const panel = document.getElementById('panel');
const copy = document.querySelector('.panel[data-clone]');
copy.innerHTML = panel.innerHTML;
copy.style.letterSpacing = panel.style.letterSpacing;

/* ---- drawing helpers ---- */
const BLUE = '#00f', PINK = '#f0f', GREEN = '#008000', OLIVE = '#808000';
const txt = (x, y, s, len, o = {}) =>
  `<text x="${x}" y="${y}" fill="${o.fill || '#000'}" text-anchor="${o.anchor || 'start'}" class="${o.cls || ''}"${len ? ` textLength="${len}" lengthAdjust="spacingAndGlyphs"` : ''}>${s}</text>`;
const rect = (x, y, w, h, fill, stroke, sw = 1) =>
  `<rect x="${x}" y="${y}" width="${w}" height="${h}" fill="${fill}" stroke="${stroke}" stroke-width="${sw}"/>`;
const solid = (d, c) => `<path class="solid" style="color:${c}" d="${d}"/>`;
const wire = (kind, ...ds) => ds.map(d => {
  let s = `<path class="${kind}" d="${d}"/>`;
  if (kind === 'thick') s += `<path class="thick-fill" d="${d}"/>`;
  if (kind === 'err') s += `<path class="err-core" d="${d}"/><path class="err-dash" d="${d}"/>`;
  return s;
}).join('');
const dot = (x, y, c, hollow) => `<circle cx="${x}" cy="${y}" r="2.4" fill="${hollow ? '#fff' : c}" stroke="${c}"/>`;
const icon = (id, x, y) => `<use href="#${id}" x="${x}" y="${y}" width="32" height="${id === 'format' ? 37 : 32}"/>`;
const tun = (x, y, c) => rect(x + .5, y + .5, 8, 8, c, '#554');
const ask = (x, y) => rect(x + .5, y + .5, 7.500, 11, '#ffffcc', GREEN) + txt(x + 1.600, y + 9.500, '?', 5, { fill: GREEN, cls: 'term' });
const note = (x, y, w, h, lines, faded) => rect(x + .5, y + .5, w - 1, h - 1, faded ? '#ffffee' : '#ffffd6', faded ? '#999' : '#000') +
  lines.map(([s, len], i) => txt(x + 2, y + 13 + i * 15, s, len, { fill: faded ? '#999' : '#000', cls: /^#/.test(s) ? 'bold' : '' })).join('');
const gv = (x, y, w, s) => rect(x + 1, y + 1, w - 2, 17, '#fff', PINK, 2) + `<use href="#globe" x="${x + 3}" y="${y + 3}" width="12" height="12"/>` +
  txt(x + 17, y + 14, s, w - 27, { fill: PINK }) + solid(`M${x + w - 8} ${y + 6}l4 3.500-4 3.500z`, PINK);
const gw = (x, y, w, s) => rect(x + .7, y + .7, w - 1.400, 17.600, '#fff', BLUE, 1.400) + solid(`M${x + 5} ${y + 6}l4 3.500-4 3.500z`, BLUE) +
  `<use href="#globe" x="${x + 10}" y="${y + 3}" width="12" height="12"/>` + txt(x + 23, y + 14, s, w - 27, { fill: BLUE });
const ring = (x, w, s) => rect(x + 2, 214, w - 1, 18, '#fff', BLUE, 1.200) + rect(x + .5, 212.500, w - 1, 18, '#fff', BLUE, 1.200) +
  txt(x + 3, 226.500, s, w - 18) + solid(`M${x + w - 11} 219h8l-4 5z`, BLUE);
const sel = (x, y, w, s, len) => rect(x + .5, y + .5, w - 1, 16, '#fff', '#000') +
  `<path d="M${x + 8.500} ${y}v16M${x + w - 8.500} ${y}v16" stroke="#000"/>` +
  solid(`M${x + 7} ${y + 4.500}v7l-5-3.500zM${x + w - 7} ${y + 4.500}v7l5-3.500zM${x + w - 18} ${y + 5.500}h8l-4 4z`, '#000') + txt(x + 12, y + 12.800, s, len);
const frame = (x, y, w, h) => rect(x + 3.500, y + 3.500, w - 7, h - 7, 'none', 'url(#hatch)', 5.500) + rect(x + .6, y + .6, w - 1.200, h - 1.200, 'none', '#000', 1.200);
const unbundle = (x, y, w, strip, rows) => rect(x + .5, y + .5, w - 1, rows.length * 17 - 1, '#fff', '#333') + rect(x + .5, y + .5, strip, rows.length * 17 - 1, '#ffffcc', '#333') +
  rows.map(([s, len, c], i) => (i ? `<path d="M${x + strip} ${y + i * 17}H${x + w}" stroke="#000" stroke-width="1.2"/>` : '') +
    txt(x + strip + (w - strip) / 2, y + i * 17 + 13, s, len, { fill: c || PINK, anchor: 'middle' })).join('');
const cells = (x, y, c) => `<path d="M${x} ${y + 1.500}h4M${x + 6} ${y + 1.500}h3M${x + 11} ${y + 1.500}h5M${x} ${y + 5.500}h3M${x + 5} ${y + 5.500}h5M${x + 12} ${y + 5.500}h3" stroke="${c}" stroke-width="2.200"/>`;
const term = (x, y, c, s, wedge, out) => rect(x + 1, y + 1, 30, 14, '#fff', c, 2) + rect(x + 3.500, y + 3.500, 25, 9, '#fff', c, .8) +
  `<rect x="${out ? x + 2 : x + 23}" y="${y + 2}" width="7" height="12" fill="${c}" opacity=".3"/>` + (s ? txt(x + (out ? 10 : 6), y + 11, s, 16, { fill: c, cls: 'term' }) : cells(x + (out ? 10 : 6), y + 4.500, c)) +
  solid(out ? `M${x + 4} ${y + 4.500}l4 3.500-4 3.500z` : `M${x + 27} ${y + 4.500}l4 3.500-4 3.500z`, '#000') + (wedge ? solid(`M${x} ${y}h8l-8 7z`, '#000') : '');
const move = (x, y, s) => `<g transform="translate(${x} ${y})">${s}</g>`;
const strConst = (x, y, h, c) => rect(x + 1, y + 1, 12, h - 2, '#fff', c, 2);
const tConst = (x, y, c) => rect(x + 1, y + 1, 14, 12, '#fff', c, 2) + rect(x + 3, y + 3, 10, 8, c, c, 1) + txt(x + 5.600, y + 10, 'T', 5, { fill: '#fff', cls: 'term' });

/* ---- structures that appear both inline and as separate cases ---- */
const smallTunnels = () => [[35, PINK], [48, GREEN], [57.500, BLUE], [66.500, GREEN], [92, OLIVE], [101, PINK], [118, PINK]].map(([y, c]) => tun(0, y, c)).join('') +
  ask(0, 80) + tun(192, 57.500, BLUE) + tun(192, 82, OLIVE) + tun(172, 134, BLUE);
const innerFalse = () => rect(1, 1, 199, 141, '#fff', 'none') + frame(0, 0, 201, 143) + wire('blue', 'M8 62H192') + wire('err', 'M8 96H15.500V86.500H192') + smallTunnels() + sel(69, 0, 63, 'False', 26);
const innerTrue = () => rect(1, 1, 199, 141, '#fff', 'none') + frame(0, 0, 201, 143) + frame(68, 22, 121, 112) +
  wire('pink', 'M8 39H68', 'M76 39H102V57', 'M8 105H68', 'M8 122H68', 'M76 122H84V69H90', 'M122 69H137') + wire('green', 'M8 52H68', 'M76 52H149.500V57', 'M8 70H68') +
  wire('blue', 'M8 62H68', 'M76 62H192', 'M90 77H84.500V96.500H177.500V126') + wire('err', 'M8 96H23', 'M55 100H61V86.500H68', 'M76 86.500H192') +
  smallTunnels() + [[35, PINK], [48, GREEN], [57, BLUE], [82, OLIVE], [101, PINK], [118, PINK]].map(([y, c]) => tun(68, y, c)).join('') + ask(68, 66) +
  tun(180.500, 57.500, BLUE) + tun(180.500, 82, OLIVE) + tun(172, 126, BLUE) +
  icon('unique', 90, 57) + icon('rename', 137, 57) + icon('eraser', 23, 71) + note(90, 108, 82, 17, [['Custom Name', 77]]) + sel(69, 0, 63, 'True', 24) + sel(97, 22, 63, 'True', 24);
const standard = () => frame(0, 0, 121, 113) + wire('green', 'M8 30H73.500V36') + wire('blue', 'M8 40H112') + wire('err', 'M8 64H24M28 64H112') + wire('pink', 'M8 83H26V47.500H61') +
  [[13, PINK], [26, GREEN], [35.500, BLUE], [60, OLIVE], [79, PINK], [95.500, PINK]].map(([y, c]) => tun(0, y, c)).join('') + ask(0, 43.500) +
  tun(112, 35.500, BLUE) + tun(112, 60, OLIVE) + icon('rename', 61, 36) + note(20, 89, 85, 17, [['Standard name', 80]]) + tun(104, 104, BLUE) + sel(29.500, 0, 63, 'False', 26);
const outerTunnels = () => tun(0, 123, BLUE) + tun(0, 147, OLIVE) + ask(0, 196) + tun(0, 237, PINK) + tun(0, 383, PINK) + tun(1575, 123, BLUE) + tun(1575, 147, OLIVE);
const outerFalse = () => frame(0, 0, 1584, 447) + wire('blue', 'M8 127.500H1575') + wire('err', 'M8 151.500H1575') + outerTunnels() + sel(760, 0, 62, 'False', 26);

/* ---- block diagram ---- */
const wires = () =>
  wire('blue', 'M153 183.500H207', 'M239 184.500H1456', 'M1488 183.500H1648V184.500H1862', 'M917 200.500H924.500V234.600H992V272.500H1156V265', 'M924.500 216.500H938',
    'M1488 199.500H1494.500V278.500H1787', 'M1628 291.500H1669V328.500H1673', 'M1669 315.500H1712V327.500H1731') +
  wire('green', 'M153 203.500H207', 'M182.500 203.500V259.500H265', 'M971 113.500H1026V180', 'M1026 174.500H1065', 'M1046 192.500H1065', 'M1059.500 192.500V208.500H1065') +
  wire('thick', 'M153 298.500H292.700', 'M334 200.500H292.700V348.500H403', 'M519 356H1392V192.500H1400', 'M519 373H1330V192.500H1339', 'M519 390H1502', 'M519 407H1742V355', 'M1411.500 407V212',
    'M1266 297H1278V200.500H1285', 'M1509 390H1516V378.500H1525', 'M1609 377H1714.500V335H1730', 'M1609 394H1639V336H1672') +
  wire('pink', 'M201 170V192.500H207', 'M324.500 171V192.500H334', 'M943 127H954.500V193', 'M954.500 161H1065', 'M813 154V192.500H825', 'M879 176V192.500H885',
    'M969 198H975V284', 'M975 227H1065', 'M1014 192H1001V296H995', 'M1001 244H1065', 'M1300 80H1304.500V180', 'M1296 106H1298.500V180', 'M1438 159H1450V191H1457',
    'M1266 278H1272V192H1285', 'M1292 338H1297V212', 'M1609 360H1721.700V342H1730', 'M1615 360V344', 'M1596 285.500H1591.600V344H1672') +
  wire('err', 'M153 221.500H162V208.500H207', 'M239 208.500H401.500V255.600H411', 'M443 255.600H452.600V212', 'M480 208.500H1014', 'M1046 208.500H1053V218.500H1065',
    'M1266 208.500H1456', 'M1484.500 211V302.600H1502', 'M1516 302.600H1524.600V314H1539', 'M1571 314H1587.600V302.600H1596', 'M1624.500 305V326H1631', 'M1660 330V352H1672', 'M1704 351H1730',
    'M1762 351H1768V302.600H1777', 'M1791 302.600H1803V227', 'M1831 223H1836V208.500H1862');
const nodes = () =>
  txt(119, 187.500, 'Item Ref in', 57, { anchor: 'end' }) + txt(119, 208.500, 'Initialized?', 55, { anchor: 'end' }) + txt(119, 226.500, 'error in (no error)', 90.600, { anchor: 'end' }) +
  txt(119, 303.500, 'SLSC EDS module', 93, { anchor: 'end' }) + txt(111, 432.500, 'Custom Device Name', 115) +
  term(121, 175.500, BLUE, 'U64', 1) + term(121, 195.500, GREEN, 'TF') + term(121, 213.500, OLIVE, '') + term(121, 290.500, PINK, '', 1) + term(110, 436.500, PINK, 'abc') +
  move(265, 57, outerTunnels()) + dot(182.500, 203.500, GREEN, 1) + dot(292.700, 298.500, PINK, 1) +
  gv(159, 151, 82, 'initialized?') + gv(292, 152, 88, 'Capabilities') + gv(488, 151, 113, 'productNumber') + gv(611, 149, 108, 'vendorNumber') +
  gv(801, 118, 142, 'Slot CD Name Format') + gv(761, 136, 90, 'capsVersion') + gv(833, 158, 115, 'Module Number') +
  gv(1150, 71, 150, 'GUID Channel Interface') + gv(1175, 97, 121, 'GUID Status  Page') + gv(1316, 150, 122, 'Physical Channels') + gv(1160, 269, 106, 'Status Channel') + gv(1171, 329, 121, 'SLSCChannelPath') +
  gw(554, 248, 99, 'product.Num') + gw(556, 272, 94, 'vendor.Num') +
  ring(193, 61, 'Boolean') + ring(322, 55, 'Variant') + ring(620, 38, 'U32') + ring(711.500, 38, 'U32') + ring(817, 49, 'String') + ring(883, 38, 'U32') +
  [207, 333, 623, 714, 825].map(x => icon('set', x, 180)).join('') + icon('get', 885, 180) + icon('trash', 448, 180) + icon('down', 411, 227) + icon('format', 938, 192) + icon('rename', 1014, 180) +
  solid('M333 197l4 3.500-4 3.500z', '#e00') +
  icon('status', 1285, 180) + icon('cmd', 1339, 180) + icon('prop', 1400, 180) + icon('tree', 1456, 179) + icon('config', 1234, 293) + icon('up', 1799, 195) +
  dot(924.500, 216.500, BLUE) + dot(954.500, 161, PINK, 1) + dot(975, 227, PINK, 1) + dot(1001, 244, PINK, 1) + dot(1026, 174.500, GREEN, 1) + dot(1059.500, 192.500, GREEN, 1) + dot(1411.500, 407, PINK, 1) +
  dot(525, 257.500, BLUE) + dot(1669, 315.500, BLUE) + dot(1615, 344, PINK, 1) + dot(1615, 360, PINK, 1) +
  tConst(955, 106, GREEN) + txt(917, 101.500, 'Force Rename (F)', 92) + note(695, 64, 171, 32, [['Need this to avoid cryptic error', 163.500], ['when changing names', 120]]) +
  '<path class="arrow" d="M866 90.500L908 95.500"/>' + solid('M916 97.500l-11-5 2 3.500-3 3.500z', '#111') +
  `<path d="M968.500 283.500V310.500L996 296.500z" style="fill:#ffffcc" stroke="#554"/><path d="M974 290l8 6h10M974 304l8-8" stroke="#443" stroke-width="2"/>` + txt(969.500, 300, '?', 5, { cls: 'term' }) +
  `<path d="M830.500 287.500V307.500L851 297z" style="fill:#ffffcc" stroke="#554"/>` + txt(832, 300, '"?', 10, { cls: 'term' }) + strConst(893.500, 278, 19, PINK) +
  note(1244, 418, 240, 32, [['#Done', 37], ['Add physical channels + properties to sysdef', 235]]) +
  '<path d="M1787 253H1789.500V444H1505V442M1789.500 255H1791.500V446H1507V444" stroke="#000"/>' + rect(1502, 250.500, 285, 191, 'none', '#000') + '<path d="M1779 441l8-8h-8z" stroke="#000"/>' +
  rect(1502.500, 251.500, 13, 14, '#ffffcc', BLUE, 1.500) + txt(1505, 263, 'N', 8, { fill: BLUE, cls: 'bold' }) + rect(1511.500, 421.500, 14, 14, '#ffffcc', BLUE, 1.500) + txt(1517, 433, 'i', 3, { fill: BLUE, cls: 'bold' }) +
  tun(1501.500, 274, BLUE) + tun(1783, 274, BLUE) + tun(1501.500, 403, PINK) + rect(1502, 386, 8, 8.500, '#fff', '#554') + txt(1503, 393, '[]', 6, { fill: PINK, cls: 'term' }) +
  rect(1502, 296.500, 14, 11, '#ffffcc', OLIVE, 1.500) + solid('M1505 299h8l-4 6z', OLIVE) + rect(1777.500, 296.500, 14, 11, '#ffffcc', OLIVE, 1.500) + solid('M1780.500 305h8l-4-6z', OLIVE) +
  icon('up', 1539, 286) + icon('tree', 1596, 274) + icon('down', 1631, 298) + icon('cmd', 1672, 324) + icon('prop', 1730, 323) +
  unbundle(1525, 352, 84, 17, [['name', 30], ['properties', 52], ['commands', 59]]) + solid('M1525 377h6v-2.500l5 4-5 4v-2.500h-6z', '#000') +
  '<path class="arrow" d="M1698.700 417L1692.500 386" />' + solid('M1691.500 379l-3 10 3-1.500 4 1z', '#111') +
  note(1653, 417, 96, 17, [['#Todo:', 38]]) + txt(1697, 430, 'Remove?', 47) +
  solid('M403 347h6v-2.500l5 4-5 4v-2.500h-6z', '#000') +
  txt(1862, 172.500, 'Parent Ref out', 75) + term(1861, 176, BLUE, 'U64', 1, 1) + term(1861, 201, OLIVE, '', 0, 1) + txt(1895, 213.500, 'error out', 46) + sel(1025, 57, 62, 'True', 24);
const rowsAfter = [['productNum', 69, BLUE], ['vendorNum', 64, BLUE], ['capsVersion', 62], ['properties', 52], ['commands', 59], ['physicalChannels', 91], ['enums', 35]];
const infoLines = [['Information to check at deployment if the board', 256], ['in the chassis matches the configured one', 222]];
const soft = (x, y, w, h) => rect(x + 1.500, y + 1.500, w - 3, h - 3, 'none', 'url(#hatch-soft)', 3);

const before = () => frame(265, 57, 1584, 447) + soft(479.500, 100, 276, 77.500) + soft(763.500, 250, 161, 100.500) + wires() +
  wire('blue', 'M519 288.500H525V200.500H623', 'M525 257.500H555', 'M519 305.500H700.500V200.500H714', 'M550.500 305.500V281.500H556') +
  wire('pink', 'M601 165H604V170', 'M604 177V192.500H623', 'M699 168V192.500H714', 'M519 322H758.500V200H825', 'M519 339H764', 'M142 444H756V328.700H916', 'M777.600 328.700V296.700H831',
    'M908 287H931V224H938', 'M924 329H953V305.700H968') +
  wire('green', 'M851 297.500H968') +
  move(1065, 122, innerFalse()) + unbundle(403, 280, 116, 16, [...rowsAfter.slice(0, 3), ['productName', 74], ...rowsAfter.slice(3)]) + nodes() +
  note(372, 65, 263, 32, infoLines) + sel(534, 100, 165, 'Default', 39) + sel(763.500, 244, 161, 'CD_Version==Default, D', 127) +
  tun(600, 169, PINK) + tun(695, 169, PINK) + tun(763.500, 325, PINK) + tun(763.500, 335, PINK) + tun(916, 283, PINK) + tun(916, 293, GREEN) + tun(916, 325, PINK) +
  dot(550.500, 305.500, BLUE) + dot(777.600, 328.700, PINK, 1);
const after = () => frame(265, 57, 1584, 447) + wires() +
  wire('blue', 'M519 305.500H525V200.500H623', 'M525 257.500H555', 'M519 322.500H700.500V200.500H714', 'M550.500 322.500V281.500H556') +
  wire('pink', 'M601 165H604V192.500H623', 'M699 168V192.500H714', 'M519 339H758.500V200H825', 'M142 444H778V297H831', 'M778 329H953.500V305.700H968', 'M907 287H931V224H938') +
  wire('green', 'M851 297.500H968') +
  move(1065, 122, innerTrue()) + unbundle(403, 297, 116, 16, rowsAfter) + nodes() + note(478, 110, 263, 32, infoLines) +
  dot(550.500, 322.500, BLUE) + dot(778, 329, PINK, 1);

const connector = () =>
  wire('green', 'M145 3526.500H199.500V3538') + wire('blue', 'M145 3542.500H187', 'M219 3542.500H261') + wire('pink', 'M145 3558H151V3550H187') + wire('thick', 'M145 3574H157.500V3558.500H187') +
  wire('err', 'M145 3590.500H163.500V3566.500H187', 'M219 3566.500H261') + icon('create', 187, 3538) +
  [['Initialized?', 55, 3531], ['Item Ref in', 57, 3547], ['Custom Device Name', 115, 3563], ['SLSC EDS module', 93, 3578.500], ['error in (no error)', 90.600, 3594.500]].map(([s, l, y]) => txt(141, y, s, l, { anchor: 'end' })).join('') +
  txt(265, 3547, 'Parent Ref out', 75) + txt(264, 3571.500, 'error out', 46);

/* ---- version-specific cases, drawn greyed out ---- */
const fadedVar = (x, y, w, s) => rect(x + 1, y + 1, w - 2, 17, '#fff', '#999', 2) + `<g opacity=".5"><use href="#globe" x="${x + 4}" y="${y + 3}" width="12" height="12"/></g>` + txt(x + 17, y + 14, s, w - 27, { fill: '#999' }) + solid(`M${x + w - 8} ${y + 6}l4 3.500-4 3.500z`, '#888');
const broken = (x, y) => `<path d="M${x - 4} ${y - 4}l8 8M${x + 4} ${y - 4}l-8 8" stroke="#f08080" stroke-width="2.4"/>`;
const version1 = () => rect(1.400, 1.400, 274.200, 75.200, '#fff', '#999', 2.700) + fadedVar(16, 46, 96, 'productNum') + fadedVar(140, 48, 91, 'vendorNum') +
  solid('M114 51l6 4.500-6 4.500zM216 56h8l-4 4z', '#888') + broken(125, 55) + solid('M131 51l5 4-5 4z', '#f8f') + '<path d="M125 61v5" stroke="#777" stroke-width="1.500"/>' + broken(220, 66) +
  tun(121, 69, PINK) + tun(216, 69, PINK) + sel(55, 0, 166, 'CD_Version==2015_2016', 128);
const version2 = () => rect(1.400, 1.400, 159.200, 104.200, '#fff', '#999', 2.700) +
  note(19, 22, 108, 77, [['Avoid freezing UI', 89], ['in 2015_2016 since', 95], ['any name change', 94], ['will make the CD to', 102], ['stop responding...', 94]], 1) +
  '<path d="M74 60.500L120 47.500" stroke="#888" stroke-width="1.5"/>' + solid('M125 46l-10 0 2 5z', '#888') + strConst(127, 34.500, 18, '#f9f') + tConst(129, 58, '#8fc78f') +
  '<g opacity=".5">' + wire('pink', 'M140 43.500H153') + wire('green', 'M145 65H147V53.500H153') + '</g>' +
  tun(153, 39, PINK) + tun(153, 49, GREEN) + tun(153, 81, PINK) + tun(0, 81, PINK) + tun(0, 91, PINK) + sel(0, 0, 162, 'CD_Version==2015_2016', 128);

const drawings = { connector, before, after, outerFalse, innerTrue, innerFalse, standard, version1, version2 };
for (const svg of document.querySelectorAll('[data-draw]')) {
  svg.style.height = svg.viewBox.baseVal.height + 'px';
  svg.innerHTML = drawings[svg.dataset.draw]();
}
```
